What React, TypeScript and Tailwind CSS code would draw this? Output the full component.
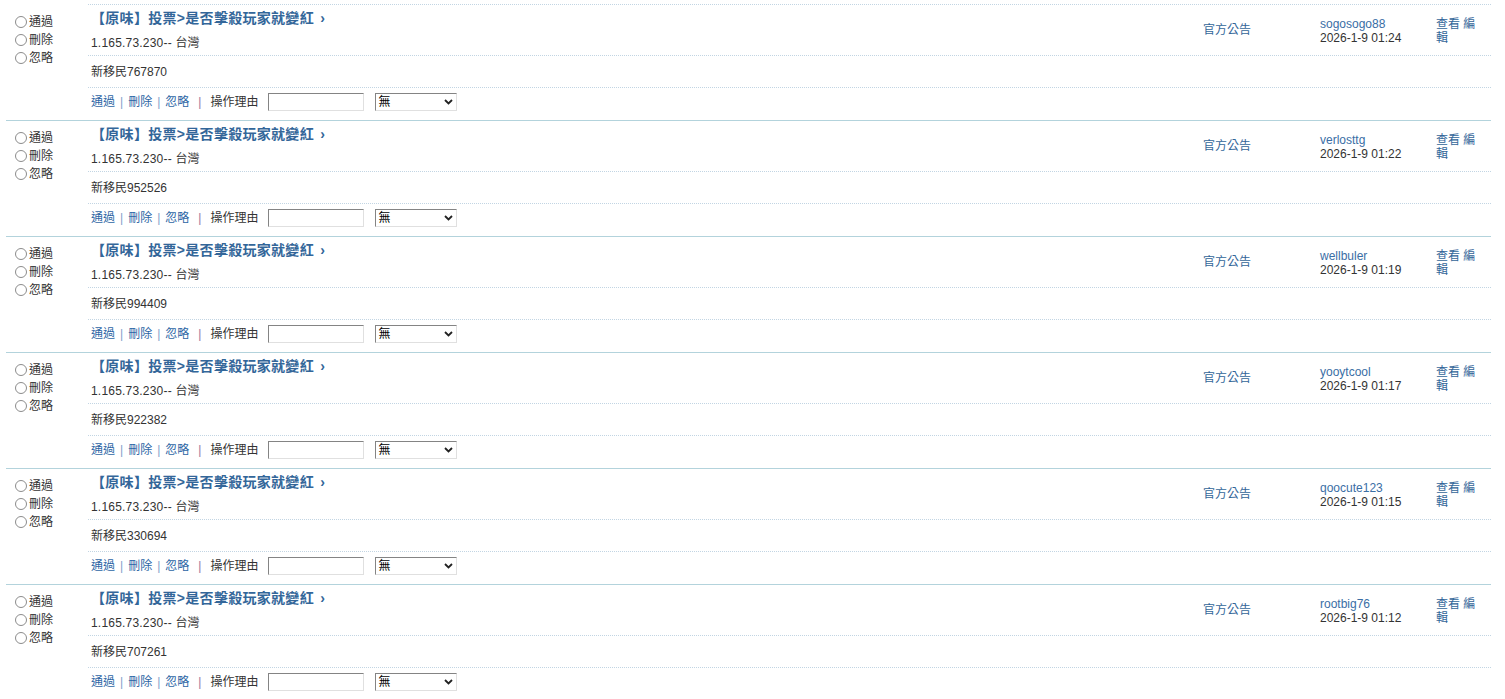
import { useState } from "react"

interface ModRow {
  id: number
  content: string
  author: string
  time: string
}

const rows: ModRow[] = [
  { id: 1, content: "新移民767870", author: "sogosogo88", time: "2026-1-9 01:24" },
  { id: 2, content: "新移民952526", author: "verlosttg", time: "2026-1-9 01:22" },
  { id: 3, content: "新移民994409", author: "wellbuler", time: "2026-1-9 01:19" },
  { id: 4, content: "新移民922382", author: "yooytcool", time: "2026-1-9 01:17" },
  { id: 5, content: "新移民330694", author: "qoocute123", time: "2026-1-9 01:15" },
  { id: 6, content: "新移民707261", author: "rootbig76", time: "2026-1-9 01:12" },
]

function Radio({ name, label }: { name: string; label: string }) {
  return (
    <label className="flex items-center h-[18px] leading-[18px]">
      <input
        type="radio"
        name={name}
        className="appearance-none w-[12px] h-[12px] rounded-full border border-[#8c8c8c] bg-white checked:bg-[radial-gradient(circle,#333_0_2.5px,#fff_3px)] m-0"
      />
      <span className="ml-[2px]">{label}</span>
    </label>
  )
}

function Row({ row, first }: { row: ModRow; first: boolean }) {
  const [reason, setReason] = useState("")

  return (
    <div className="flex">
      {/* radio column */}
      <div
        className={`w-[82px] pl-[9px] pt-[8px] border-t ${first ? "border-transparent" : "border-[#b3d3dc]"}`}
      >
        <Radio name={`mod-${row.id}`} label="通過" />
        <Radio name={`mod-${row.id}`} label="刪除" />
        <Radio name={`mod-${row.id}`} label="忽略" />
      </div>

      <div
        className={`flex-1 border-t ${first ? "border-dotted border-[#c2d5e3]" : "border-solid border-[#b3d3dc]"}`}
      >
        <div className="flex h-[50px]">
          <div className="flex-1 pl-[3px] pt-[4px]">
            <a href="#" className="block h-[18px] leading-[18px] text-[14px] font-bold tracking-[0.3px] text-[#336699]">
              【原味】投票&gt;是否擊殺玩家就變紅 <span className="ml-[2px]">›</span>
            </a>
            <div className="mt-[7px] h-[18px] leading-[18px] tracking-[0.2px]">1.165.73.230-- 台灣</div>
          </div>
          <div className="w-[117px] pl-[3px] flex items-center">
            <a href="#" className="text-[#336699]">官方公告</a>
          </div>
          <div className="w-[116px] pl-[3px] pt-[1px] flex flex-col justify-center leading-[14px]">
            <a href="#" className="text-[#3a6ea5]">{row.author}</a>
            <span>{row.time}</span>
          </div>
          <div className="w-[58px] pl-[3px] pr-[10px] pt-[1px] flex items-center leading-[14px]">
            <div>
              <a href="#" className="text-[#336699]">查看</a>{" "}
              <a href="#" className="text-[#336699]">編輯</a>
            </div>
          </div>
        </div>

        <div className="h-[32px] pl-[3px] flex items-center border-t border-dotted border-[#c2d5e3]">
          {row.content}
        </div>

        <div className="h-[33px] pl-[3px] pt-[5px] border-t border-dotted border-[#c2d5e3]">
          <div className="flex items-center h-[18px]">
            <a href="#" className="text-[#2d66a5]">通過</a>
            <span className="mx-[5px] text-[#7f9fca]">|</span>
            <a href="#" className="text-[#2d66a5]">刪除</a>
            <span className="mx-[5px] text-[#7f9fca]">|</span>
            <a href="#" className="text-[#2d66a5]">忽略</a>
            <span className="ml-[9px] mr-[9px] text-[#96749a]">|</span>
            <span>操作理由</span>
            <input
              type="text"
              value={reason}
              onChange={(e) => setReason(e.target.value)}
              className="ml-[10px] w-[96px] h-[18px] bg-white border border-t-[#848484] border-l-[#848484] border-r-[#e0e0e0] border-b-[#e0e0e0] outline-none px-[2px] text-[12px]"
            />
            <div className="relative ml-[11px] w-[82px] h-[18px]">
              <select className="appearance-none w-full h-full bg-white border border-t-[#848484] border-l-[#848484] border-r-[#e0e0e0] border-b-[#e0e0e0] pl-[2px] text-[12px] leading-[16px] text-black outline-none">
                <option>無</option>
                <option>廣告/SPAM</option>
                <option>惡意灌水</option>
                <option>違規內容</option>
              </select>
              <svg
                className="absolute right-[4px] top-[6px] pointer-events-none"
                width="9"
                height="6"
                viewBox="0 0 9 6"
              >
                <path d="M1 1l3.5 3.5L8 1" fill="none" stroke="#222" strokeWidth="1.8" />
              </svg>
            </div>
          </div>
        </div>
      </div>
    </div>
  )
}

export default function App() {
  return (
    <div
      className="min-h-screen bg-white pt-[4px] text-[12px] text-[#333]"
      style={{ fontFamily: '"Liberation Sans", "Noto Sans CJK TC", sans-serif' }}
    >
      <div className="ml-[6px] w-[1485px]">
        {rows.map((row, i) => (
          <Row key={row.id} row={row} first={i === 0} />
        ))}
      </div>
    </div>
  )
}
